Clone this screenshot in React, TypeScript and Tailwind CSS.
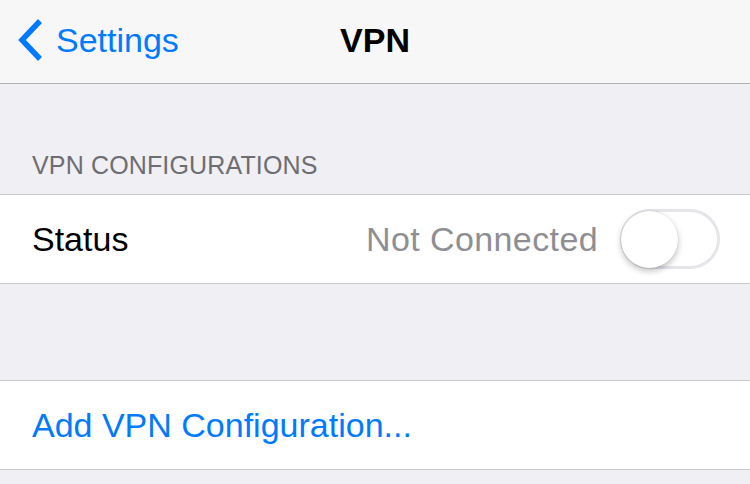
import React from "react";

export default function App() {
  const font = { fontFamily: '"Liberation Sans", Arial, sans-serif' };
  return (
    <div className="w-[750px] h-[484px] overflow-hidden bg-[#efeff4] flex flex-col" style={font}>
      <div className="relative h-[84px] shrink-0 bg-[#f7f7f7] border-b border-[#b2b2b2] flex items-center pb-[4px]">
        <div className="flex items-center pl-[17px]">
          <svg width="26" height="44" viewBox="0 0 26 44" className="shrink-0">
            <polyline points="23,3 5,22 23,41" fill="none" stroke="#007aff" strokeWidth="5.5" strokeLinecap="butt" strokeLinejoin="miter" />
          </svg>
          <span className="ml-[13px] text-[34px] leading-[40px] text-[#007aff]">Settings</span>
        </div>
        <div className="absolute left-0 right-0 top-0 bottom-[4px] flex items-center justify-center pointer-events-none">
          <span className="text-[34px] leading-[40px] font-bold text-black">VPN</span>
        </div>
      </div>
      <div className="h-[110px] shrink-0 flex items-end pb-[14px] pl-[32px]">
        <span className="text-[25px] leading-[30px] tracking-[0.15px] text-[#6d6d72]">VPN CONFIGURATIONS</span>
      </div>
      <div className="h-[90px] shrink-0 bg-white border-y border-[#c8c7cc] flex items-center pl-[32px] pr-[30px]">
        <span className="text-[34px] leading-[40px] text-black">Status</span>
        <span className="ml-auto text-[34px] leading-[40px] tracking-[0.4px] text-[#8e8e93]">Not Connected</span>
        <div className="relative ml-[22px] w-[100px] h-[60px] rounded-full border-[3px] border-[#e5e5ea] bg-white shrink-0">
          <div className="absolute left-[-2px] top-[-1px] w-[57px] h-[57px] rounded-full bg-white shadow-[0_3px_6px_rgba(0,0,0,0.25),0_0_0_0.5px_rgba(0,0,0,0.08)]" />
        </div>
      </div>
      <div className="h-[96px] shrink-0" />
      <div className="h-[90px] shrink-0 bg-white border-y border-[#c8c7cc] flex items-center pl-[32px]">
        <span className="text-[34px] leading-[40px] text-[#007aff]">Add VPN Configuration...</span>
      </div>
      <div className="flex-1" />
    </div>
  );
}
